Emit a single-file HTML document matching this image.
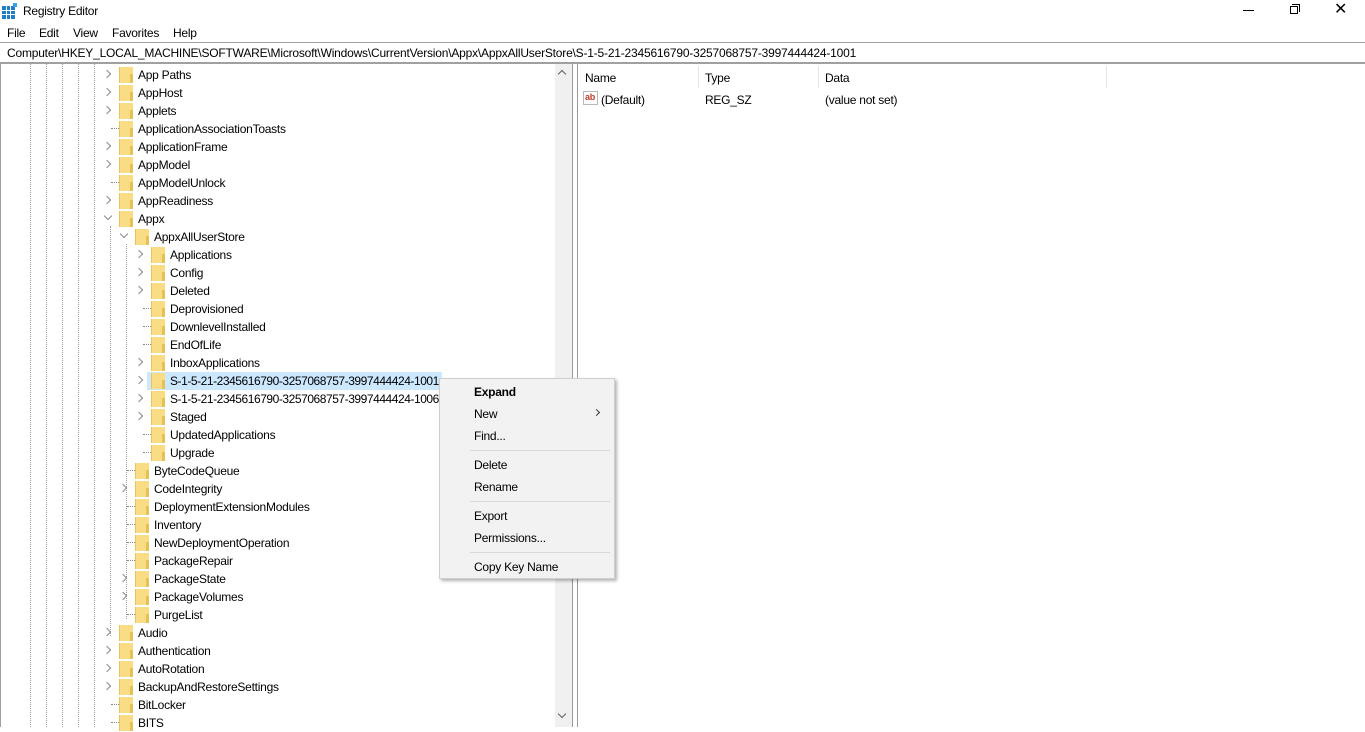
<!DOCTYPE html>
<html><head><meta charset="utf-8"><style>
*{margin:0;padding:0;box-sizing:border-box}
body{width:1365px;height:727px;overflow:hidden;background:#fff;font-family:"Liberation Sans",sans-serif;font-size:12px;color:#000;position:relative;letter-spacing:-0.25px}
.a{position:absolute;white-space:nowrap}
.r{position:absolute;height:18px;line-height:18px}
.f{position:absolute;top:1px;width:14px;height:16px;background:#f9dc83;border-left:1px solid #e9c45a}
.f:after{content:"";position:absolute;right:0;top:7px;width:3px;height:9px;background:#e8c055}
.t{position:absolute;top:0;white-space:nowrap}
.ar{position:absolute;top:5px;width:6px;height:6px;border-right:1.3px solid #8a8a8a;border-bottom:1.3px solid #8a8a8a;transform:rotate(-45deg)}
.dn{transform:rotate(45deg);top:3px}
.d{position:absolute;top:8px;width:8px;border-top:1px dotted #888}
.vl{position:absolute;top:64px;height:663px;border-left:1px dotted #999}
.mi{position:absolute;left:474px;font-size:12px}
.sep{position:absolute;left:470px;width:140px;height:1px;background:#d8d8d8}
.sid{letter-spacing:-0.45px}
</style></head><body>
<svg class="a" style="left:2px;top:3px" width="16" height="16" viewBox="0 0 16 16"><rect x="0" y="3" width="13" height="13" fill="#1e7fc8"/><g stroke="#fff" stroke-width="1"><line x1="4.5" y1="3" x2="4.5" y2="16"/><line x1="8.5" y1="3" x2="8.5" y2="16"/><line x1="0" y1="7.5" x2="13" y2="7.5"/><line x1="0" y1="11.5" x2="13" y2="11.5"/></g><rect x="11" y="0" width="4" height="4" fill="#3aa0e8"/></svg>
<div class="a" style="left:23px;top:4px;font-size:12px">Registry Editor</div>
<div class="a" style="left:1243px;top:10px;width:11px;height:1px;background:#000"></div>
<div class="a" style="left:1290px;top:6px;width:8px;height:8px;border:1px solid #000;background:#fff"></div>
<div class="a" style="left:1292px;top:4px;width:8px;height:8px;border-top:1px solid #000;border-right:1px solid #000"></div>
<div class="a" style="left:1334px;top:2px;font-size:16px;line-height:16px">✕</div>
<div class="a" style="left:7px;top:26px">File</div>
<div class="a" style="left:39px;top:26px">Edit</div>
<div class="a" style="left:73px;top:26px">View</div>
<div class="a" style="left:112px;top:26px">Favorites</div>
<div class="a" style="left:173px;top:26px">Help</div>
<div class="a" style="left:0;top:42px;width:1365px;height:1px;background:#a0a0a0"></div>
<div class="a" style="left:7px;top:46px;letter-spacing:-0.2px">Computer\HKEY_LOCAL_MACHINE\SOFTWARE\Microsoft\Windows\CurrentVersion\Appx\AppxAllUserStore\S-1-5-21-2345616790-3257068757-3997444424-1001</div>
<div class="a" style="left:0;top:62px;width:1365px;height:2px;background:#a0a0a0"></div>
<div class="a" style="left:0;top:64px;width:1px;height:663px;background:#a0a0a0"></div>
<div class="vl" style="left:30px"></div><div class="vl" style="left:46px"></div><div class="vl" style="left:62px"></div><div class="vl" style="left:78px"></div><div class="vl" style="left:94px"></div>
<div class="a" style="left:110px;top:226px;height:410px;border-left:1px dotted #999"></div>
<div class="a" style="left:126px;top:244px;height:375px;border-left:1px dotted #999"></div>

<div class="r" style="top:66px;left:0"><div class="ar" style="left:104px"></div><div class="f" style="left:119px"></div><div class="t" style="left:138px">App Paths</div></div>
<div class="r" style="top:84px;left:0"><div class="ar" style="left:104px"></div><div class="f" style="left:119px"></div><div class="t" style="left:138px">AppHost</div></div>
<div class="r" style="top:102px;left:0"><div class="ar" style="left:104px"></div><div class="f" style="left:119px"></div><div class="t" style="left:138px">Applets</div></div>
<div class="r" style="top:120px;left:0"><div class="d" style="left:111px"></div><div class="f" style="left:119px"></div><div class="t" style="left:138px">ApplicationAssociationToasts</div></div>
<div class="r" style="top:138px;left:0"><div class="ar" style="left:104px"></div><div class="f" style="left:119px"></div><div class="t" style="left:138px">ApplicationFrame</div></div>
<div class="r" style="top:156px;left:0"><div class="ar" style="left:104px"></div><div class="f" style="left:119px"></div><div class="t" style="left:138px">AppModel</div></div>
<div class="r" style="top:174px;left:0"><div class="d" style="left:111px"></div><div class="f" style="left:119px"></div><div class="t" style="left:138px">AppModelUnlock</div></div>
<div class="r" style="top:192px;left:0"><div class="ar" style="left:104px"></div><div class="f" style="left:119px"></div><div class="t" style="left:138px">AppReadiness</div></div>
<div class="r" style="top:210px;left:0"><div class="ar dn" style="left:105px"></div><div class="f" style="left:119px"></div><div class="t" style="left:138px">Appx</div></div>
<div class="r" style="top:228px;left:0"><div class="ar dn" style="left:121px"></div><div class="f" style="left:135px"></div><div class="t" style="left:154px">AppxAllUserStore</div></div>
<div class="r" style="top:246px;left:0"><div class="ar" style="left:136px"></div><div class="f" style="left:151px"></div><div class="t" style="left:170px">Applications</div></div>
<div class="r" style="top:264px;left:0"><div class="ar" style="left:136px"></div><div class="f" style="left:151px"></div><div class="t" style="left:170px">Config</div></div>
<div class="r" style="top:282px;left:0"><div class="ar" style="left:136px"></div><div class="f" style="left:151px"></div><div class="t" style="left:170px">Deleted</div></div>
<div class="r" style="top:300px;left:0"><div class="d" style="left:143px"></div><div class="f" style="left:151px"></div><div class="t" style="left:170px">Deprovisioned</div></div>
<div class="r" style="top:318px;left:0"><div class="d" style="left:143px"></div><div class="f" style="left:151px"></div><div class="t" style="left:170px">DownlevelInstalled</div></div>
<div class="r" style="top:336px;left:0"><div class="d" style="left:143px"></div><div class="f" style="left:151px"></div><div class="t" style="left:170px">EndOfLife</div></div>
<div class="r" style="top:354px;left:0"><div class="ar" style="left:136px"></div><div class="f" style="left:151px"></div><div class="t" style="left:170px">InboxApplications</div></div>
<div class="a" style="left:147px;top:372px;width:295px;height:18px;background:#cce8ff"></div>
<div class="r" style="top:372px;left:0"><div class="ar" style="left:136px"></div><div class="f" style="left:151px"></div><div class="t sid" style="left:170px">S-1-5-21-2345616790-3257068757-3997444424-1001</div></div>
<div class="r" style="top:390px;left:0"><div class="ar" style="left:136px"></div><div class="f" style="left:151px"></div><div class="t sid" style="left:170px">S-1-5-21-2345616790-3257068757-3997444424-1006</div></div>
<div class="r" style="top:408px;left:0"><div class="ar" style="left:136px"></div><div class="f" style="left:151px"></div><div class="t" style="left:170px">Staged</div></div>
<div class="r" style="top:426px;left:0"><div class="d" style="left:143px"></div><div class="f" style="left:151px"></div><div class="t" style="left:170px">UpdatedApplications</div></div>
<div class="r" style="top:444px;left:0"><div class="d" style="left:143px"></div><div class="f" style="left:151px"></div><div class="t" style="left:170px">Upgrade</div></div>
<div class="r" style="top:462px;left:0"><div class="d" style="left:127px"></div><div class="f" style="left:135px"></div><div class="t" style="left:154px">ByteCodeQueue</div></div>
<div class="r" style="top:480px;left:0"><div class="ar" style="left:120px"></div><div class="f" style="left:135px"></div><div class="t" style="left:154px">CodeIntegrity</div></div>
<div class="r" style="top:498px;left:0"><div class="d" style="left:127px"></div><div class="f" style="left:135px"></div><div class="t" style="left:154px">DeploymentExtensionModules</div></div>
<div class="r" style="top:516px;left:0"><div class="d" style="left:127px"></div><div class="f" style="left:135px"></div><div class="t" style="left:154px">Inventory</div></div>
<div class="r" style="top:534px;left:0"><div class="d" style="left:127px"></div><div class="f" style="left:135px"></div><div class="t" style="left:154px">NewDeploymentOperation</div></div>
<div class="r" style="top:552px;left:0"><div class="d" style="left:127px"></div><div class="f" style="left:135px"></div><div class="t" style="left:154px">PackageRepair</div></div>
<div class="r" style="top:570px;left:0"><div class="ar" style="left:120px"></div><div class="f" style="left:135px"></div><div class="t" style="left:154px">PackageState</div></div>
<div class="r" style="top:588px;left:0"><div class="ar" style="left:120px"></div><div class="f" style="left:135px"></div><div class="t" style="left:154px">PackageVolumes</div></div>
<div class="r" style="top:606px;left:0"><div class="d" style="left:127px"></div><div class="f" style="left:135px"></div><div class="t" style="left:154px">PurgeList</div></div>
<div class="r" style="top:624px;left:0"><div class="ar" style="left:104px"></div><div class="f" style="left:119px"></div><div class="t" style="left:138px">Audio</div></div>
<div class="r" style="top:642px;left:0"><div class="ar" style="left:104px"></div><div class="f" style="left:119px"></div><div class="t" style="left:138px">Authentication</div></div>
<div class="r" style="top:660px;left:0"><div class="ar" style="left:104px"></div><div class="f" style="left:119px"></div><div class="t" style="left:138px">AutoRotation</div></div>
<div class="r" style="top:678px;left:0"><div class="ar" style="left:104px"></div><div class="f" style="left:119px"></div><div class="t" style="left:138px">BackupAndRestoreSettings</div></div>
<div class="r" style="top:696px;left:0"><div class="d" style="left:111px"></div><div class="f" style="left:119px"></div><div class="t" style="left:138px">BitLocker</div></div>
<div class="r" style="top:714px;left:0"><div class="d" style="left:111px"></div><div class="f" style="left:119px"></div><div class="t" style="left:138px">BITS</div></div>

<div class="a" style="left:555px;top:64px;width:17px;height:663px;background:#f0f0f0"></div>
<div class="a" style="left:559px;top:71px;width:6px;height:6px;border-left:1.5px solid #606060;border-top:1.5px solid #606060;transform:rotate(45deg)"></div>
<div class="a" style="left:559px;top:711px;width:6px;height:6px;border-right:1.5px solid #606060;border-bottom:1.5px solid #606060;transform:rotate(45deg)"></div>
<div class="a" style="left:572px;top:64px;width:1px;height:663px;background:#9a9a9a"></div>
<div class="a" style="left:577px;top:64px;width:1px;height:663px;background:#9a9a9a"></div>

<div class="a" style="left:585px;top:71px">Name</div>
<div class="a" style="left:698px;top:66px;width:1px;height:22px;background:#e5e5e5"></div>
<div class="a" style="left:705px;top:71px">Type</div>
<div class="a" style="left:818px;top:66px;width:1px;height:22px;background:#e5e5e5"></div>
<div class="a" style="left:825px;top:71px">Data</div>
<div class="a" style="left:1106px;top:66px;width:1px;height:22px;background:#e5e5e5"></div>
<div class="a" style="left:583px;top:91px;width:15px;height:14px;border:1px solid #b8b8b8;background:#fff;color:#c0392b;font-size:9px;font-weight:bold;line-height:11px;padding-left:1px">ab</div>
<div class="a" style="left:601px;top:93px">(Default)</div>
<div class="a" style="left:705px;top:93px">REG_SZ</div>
<div class="a" style="left:825px;top:93px">(value not set)</div>

<div class="a" style="left:439px;top:378px;width:176px;height:201px;background:#f2f2f2;border:1px solid #cfcfcf;box-shadow:2px 2px 3px rgba(0,0,0,0.3)"></div>
<div class="mi" style="top:385px;font-weight:bold">Expand</div>
<div class="mi" style="top:407px">New</div>
<div class="a" style="left:594px;top:410px;width:5px;height:5px;border-right:1px solid #333;border-bottom:1px solid #333;transform:rotate(-45deg)"></div>
<div class="mi" style="top:429px">Find...</div>
<div class="sep" style="top:450px"></div>
<div class="mi" style="top:458px">Delete</div>
<div class="mi" style="top:480px">Rename</div>
<div class="sep" style="top:501px"></div>
<div class="mi" style="top:509px">Export</div>
<div class="mi" style="top:531px">Permissions...</div>
<div class="sep" style="top:552px"></div>
<div class="mi" style="top:560px">Copy Key Name</div>
</body></html>
